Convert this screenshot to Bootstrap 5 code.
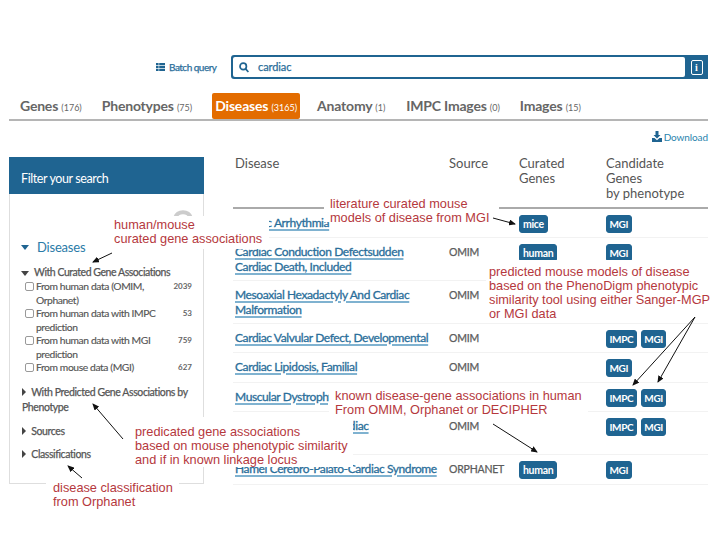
<!DOCTYPE html>
<html lang="en">
<head>
<meta charset="utf-8">
<title>Disease search</title>
<link href="https://cdn.jsdelivr.net/npm/bootstrap@5.3.0/dist/css/bootstrap.min.css" rel="stylesheet">
<style>
body{font-family:Lato,"Liberation Sans",sans-serif;background:#fff;color:#555;width:720px;height:540px;overflow:hidden;position:relative}
.page-wrap{padding:55px 12px 0 9px}
.search-row{height:24px;padding-left:147px}
.batch-link{color:#2a6e9a;font-size:10px;letter-spacing:-.5px;-webkit-text-stroke:.25px #2a6e9a;width:75px;text-decoration:none;gap:4px}
.search-shell{width:477px;height:24px;background:#1f6491;border-radius:3px 0 0 3px;padding:2px 0 2px 2px}
.search-field{width:452px;height:20px;background:#fff;border-radius:2px;padding-left:6px;gap:9px;color:#2a6e9a;font-size:11px;letter-spacing:-.1px;-webkit-text-stroke:.25px #2a6e9a}
.info-wrap{flex:1}
.info-box{width:12px;height:15px;border:1px solid #fff;border-radius:2px;color:#fff;font:700 10px/13px "Liberation Serif",serif;text-align:center}
.tab-bar{margin-top:14px;height:28px;border-bottom:2px solid #b5b5b5;padding-left:3px}
.tab-item{color:#666;font-size:14px;letter-spacing:-.2px;font-weight:700;line-height:26px;height:26px;padding:0 3px;white-space:nowrap;text-decoration:none;border-radius:2px}
.tab-item small{font-size:9px;font-weight:400;letter-spacing:0}
.tab-genes{margin-right:14px;margin-left:5px}
.tab-pheno{margin-right:17px}
.tab-active{background:#e36c00;color:#fff;margin-right:14px}
.tab-anat{margin-right:15px}
.tab-impc{margin-right:14px}
.dl-row{height:36px;padding-top:10px;font-size:10px;line-height:12px;letter-spacing:-.1px;color:#2a84ad;gap:2px}
.main-row{gap:29px}
.filter-card{width:195px;height:327px;border:1px solid #dedede;border-top:0;border-radius:0;flex:none;font-size:10.3px;line-height:13.5px;color:#555}
.filter-head{height:37px;background:#1f6491;color:#fff;font-size:12.5px;letter-spacing:-.4px;line-height:43px;padding-left:12px;margin:0 -1px}
.spin-arc{height:33px;padding:13px 0 0 162px}
.facet-title{color:#2a7ba8;font-size:13px;letter-spacing:-.2px;line-height:17px;padding-left:11px;gap:8px;height:17px;margin-top:12px}
.facet-sub{font-size:10.5px;letter-spacing:-.45px;-webkit-text-stroke:.25px #555;padding-left:11px;gap:5px;margin-top:10px;height:14px;color:#555}
.facet-list{list-style:none;margin:0;padding:0 11px 0 15px}
.facet-list li{display:flex;align-items:flex-start}
.facet-list .form-check-input{width:9px;height:9px;margin:2px 2px 0 0;border-radius:2px;flex:none;border-color:#999}
.facet-list .lbl{width:130px;flex:none;letter-spacing:-.4px;-webkit-text-stroke:.15px #555}
.facet-list .num{margin-left:auto;font-size:8px;font-weight:700;color:#666}
.facet-fold{font-size:10.5px;letter-spacing:-.4px;-webkit-text-stroke:.25px #555;line-height:15px;padding-left:12px;color:#555}
.facet-fold svg{margin-right:3px}
.fold-a{margin-top:10px}
.fold-b{margin-top:9px}
.fold-c{margin-top:8px}
.tri{vertical-align:0}
.result-table{width:475px;table-layout:fixed;margin:-1px 0 0;font-size:12px;color:#555}
.result-table>*>tr>*{padding:6px 2px 0;border-bottom:1px solid #f2f2f2;vertical-align:top;line-height:15px;color:#555}
.result-table thead th{font-weight:400;font-size:13px;line-height:15px;height:52px;padding-top:0;border-bottom:2px solid #aaa}
.result-table td.src{font-size:10.5px;letter-spacing:-.2px;-webkit-text-stroke:.25px #5c5c5c;padding-top:7px;color:#5c5c5c}
.col-dis{width:214px}.col-src{width:70px}.col-cur{width:87px}.col-can{width:104px}
.dis-link{color:#2a6e9a;font-size:12px;letter-spacing:-.4px;-webkit-text-stroke:.3px #2a6e9a;text-decoration:underline;text-decoration-color:#7fb2d0;text-decoration-thickness:2px;text-underline-offset:2px}
.tag-btn{background:#1f6491;color:#fff;font-size:10.5px;letter-spacing:-.3px;font-weight:700;line-height:16px;padding:0 3px;border-radius:3px;border:1px solid #1f6491;display:inline-block;height:18px;margin-right:4px}
.tag-caps{font-size:10px;letter-spacing:-.35px;padding:0 2.5px}
.h28{height:29px}.h29{height:30px}.h42{height:43px}
.note{position:absolute;background:#fff;color:#b5383d;font-family:"Liberation Sans",sans-serif;font-size:12.75px;line-height:14px;white-space:nowrap}
.note-a{left:324px;top:195px;width:175px;height:27px;padding:2px 0 0 6px}
.note-b{left:112px;top:216px;width:157px;height:33px;padding:2px 0 0 2px}
.note-c{left:486px;top:260px;width:226px;height:60px;padding:5px 0 0 3px}
.note-d{left:329px;top:385px;width:259px;height:32px;padding:4px 0 0 6px;line-height:13.5px}
.note-e{left:130px;top:417px;width:223px;height:50px;padding:8px 0 0 5px}
.note-f{left:46px;top:478px;width:133px;height:34px;padding:3px 0 0 7px}
.arrows{position:absolute;left:0;top:0;width:720px;height:540px;pointer-events:none}
</style>
</head>
<body>
<div class="page-wrap">
  <div class="d-flex align-items-center search-row">
    <a class="batch-link d-flex align-items-center" href="#">
      <svg width="9" height="8" viewBox="0 0 9 8" fill="#1f6491"><rect width="2.6" height="2.2"/><rect x="3.2" width="5.8" height="2.2"/><rect y="2.9" width="2.6" height="2.2"/><rect x="3.2" y="2.9" width="5.8" height="2.2"/><rect y="5.8" width="2.6" height="2.2"/><rect x="3.2" y="5.8" width="5.8" height="2.2"/></svg>
      Batch query</a>
    <div class="search-shell d-flex align-items-center">
      <div class="search-field d-flex align-items-center">
        <svg width="10" height="11" viewBox="0 0 10 11" fill="none" stroke="#1f6491" stroke-width="1.7"><circle cx="4.2" cy="4.4" r="3.2"/><path d="M6.6 6.9 9.4 10"/></svg>
        <span>cardiac</span>
      </div>
      <div class="info-wrap d-flex justify-content-center"><div class="info-box">i</div></div>
    </div>
  </div>

  <nav class="nav tab-bar align-items-start">
    <a class="tab-item tab-genes" href="#">Genes <small>(176)</small></a>
    <a class="tab-item tab-pheno" href="#">Phenotypes <small>(75)</small></a>
    <a class="tab-item tab-active" href="#">Diseases <small>(3165)</small></a>
    <a class="tab-item tab-anat" href="#">Anatomy <small>(1)</small></a>
    <a class="tab-item tab-impc" href="#">IMPC Images <small>(0)</small></a>
    <a class="tab-item" href="#">Images <small>(15)</small></a>
  </nav>

  <div class="d-flex justify-content-end align-items-start dl-row">
    <svg width="10" height="11" viewBox="0 0 10 11" fill="#1f6491"><path d="M3.5 0h3v4h2L5 7.6 1.5 4h2z"/><path d="M0 7h2.5L5 9.2 7.5 7H10v4H0z"/></svg>
    <span>Download</span>
  </div>

  <div class="d-flex main-row">
    <aside class="card filter-card">
      <div class="filter-head">Filter your search</div>
      <div class="spin-arc"><svg width="22" height="10" viewBox="0 0 22 10" fill="none" stroke="#ccc" stroke-width="4"><path d="M3 9A8.5 8.5 0 0 1 19 9"/></svg></div>
      <div class="facet-title d-flex align-items-center"><svg width="8" height="5" viewBox="0 0 8 5" fill="#1f6491"><path d="M0 0h8L4 5z"/></svg>Diseases</div>
      <div class="facet-sub d-flex align-items-center"><svg width="8" height="5" viewBox="0 0 8 5" fill="#444"><path d="M0 0h8L4 5z"/></svg>With Curated Gene Associations</div>
      <ul class="facet-list">
        <li><input class="form-check-input" type="checkbox" aria-label="human"><span class="lbl">From human data (OMIM, Orphanet)</span><span class="num">2039</span></li>
        <li><input class="form-check-input" type="checkbox" aria-label="impc"><span class="lbl">From human data with IMPC prediction</span><span class="num">53</span></li>
        <li><input class="form-check-input" type="checkbox" aria-label="mgi"><span class="lbl">From human data with MGI prediction</span><span class="num">759</span></li>
        <li><input class="form-check-input" type="checkbox" aria-label="mouse"><span class="lbl">From mouse data (MGI)</span><span class="num">627</span></li>
      </ul>
      <div class="facet-fold fold-a"><svg class="tri" width="4" height="8" viewBox="0 0 4 8" fill="#444"><path d="M0 0l4 4-4 4z"/></svg> With Predicted Gene Associations by Phenotype</div>
      <div class="facet-fold fold-b"><svg class="tri" width="4" height="8" viewBox="0 0 4 8" fill="#444"><path d="M0 0l4 4-4 4z"/></svg> Sources</div>
      <div class="facet-fold fold-c"><svg class="tri" width="4" height="8" viewBox="0 0 4 8" fill="#444"><path d="M0 0l4 4-4 4z"/></svg> Classifications</div>
    </aside>

    <table class="table result-table">
      <colgroup><col class="col-dis"><col class="col-src"><col class="col-cur"><col class="col-can"></colgroup>
      <thead><tr><th>Disease</th><th>Source</th><th>Curated<br>Genes</th><th>Candidate<br>Genes<br>by phenotype</th></tr></thead>
      <tbody>
        <tr class="h28"><td><a class="dis-link" href="#">Cardiac Arrhythmia</a></td><td></td><td><span class="tag-btn">mice</span></td><td><span class="tag-btn tag-caps">MGI</span></td></tr>
        <tr class="h42"><td><a class="dis-link" href="#">Cardiac Conduction Defectsudden<br>Cardiac Death, Included</a></td><td class="src">OMIM</td><td><span class="tag-btn">human</span></td><td><span class="tag-btn tag-caps">MGI</span></td></tr>
        <tr class="h42"><td><a class="dis-link" href="#">Mesoaxial Hexadactyly And Cardiac Malformation</a></td><td class="src">OMIM</td><td></td><td></td></tr>
        <tr class="h28"><td><a class="dis-link" href="#">Cardiac Valvular Defect, Developmental</a></td><td class="src">OMIM</td><td></td><td><span class="tag-btn tag-caps">IMPC</span><span class="tag-btn tag-caps">MGI</span></td></tr>
        <tr class="h29"><td><a class="dis-link" href="#">Cardiac Lipidosis, Familial</a></td><td class="src">OMIM</td><td></td><td><span class="tag-btn tag-caps">MGI</span></td></tr>
        <tr class="h28"><td><a class="dis-link" href="#">Muscular Dystrophy</a></td><td></td><td></td><td><span class="tag-btn tag-caps">IMPC</span><span class="tag-btn tag-caps">MGI</span></td></tr>
        <tr class="h42"><td><a class="dis-link" href="#">Noonan Syndrome, Cardiac</a></td><td class="src">OMIM</td><td></td><td><span class="tag-btn tag-caps">IMPC</span><span class="tag-btn tag-caps">MGI</span></td></tr>
        <tr class="h29"><td><a class="dis-link" href="#">Hamel Cerebro-Palato-Cardiac Syndrome</a></td><td class="src">ORPHANET</td><td><span class="tag-btn">human</span></td><td><span class="tag-btn tag-caps">MGI</span></td></tr>
      </tbody>
    </table>
  </div>
</div>

<div class="note note-a">literature curated mouse<br>models of disease from MGI</div>
<div class="note note-b">human/mouse<br>curated gene associations</div>
<div class="note note-c">predicted mouse models of disease<br>based on the PhenoDigm phenotypic<br>similarity tool using either Sanger-MGP<br>or MGI data</div>
<div class="note note-d">known disease-gene associations in human<br>From OMIM, Orphanet or DECIPHER</div>
<div class="note note-e">predicated gene associations<br>based on mouse phenotypic similarity<br>and if in known linkage locus</div>
<div class="note note-f">disease classification<br>from Orphanet</div>

<svg class="arrows" viewBox="0 0 720 540" fill="none" stroke="#111" stroke-width="1">
  <defs><marker id="ah" markerWidth="7" markerHeight="6" refX="6" refY="3" orient="auto" markerUnits="userSpaceOnUse"><path d="M0 0 7 3 0 6z" fill="#111" stroke="none"/></marker></defs>
  <path d="M112 253 93 262" marker-end="url(#ah)"/>
  <path d="M493 218 515 224" marker-end="url(#ah)"/>
  <path d="M695 317 633 385" marker-end="url(#ah)"/>
  <path d="M695 317 658 382" marker-end="url(#ah)"/>
  <path d="M493 424 537 452" marker-end="url(#ah)"/>
  <path d="M123 439 93 404" marker-end="url(#ah)"/>
  <path d="M82 478 68 466" marker-end="url(#ah)"/>
</svg>
<script src="https://cdn.jsdelivr.net/npm/bootstrap@5.3.0/dist/js/bootstrap.bundle.min.js"></script>
</body>
</html>
